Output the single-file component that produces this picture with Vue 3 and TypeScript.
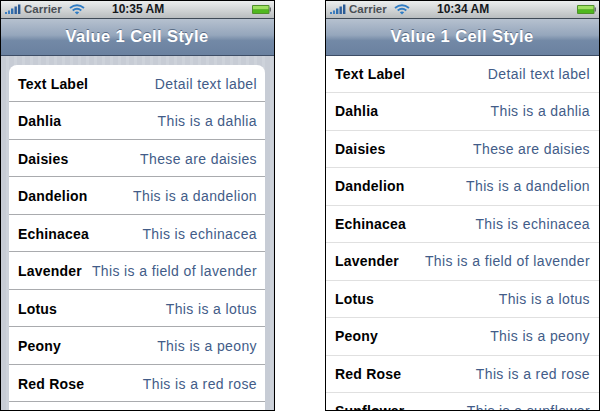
<script setup lang="ts">
interface Row { label: string; detail: string }
const rows: Row[] = [
  { label: 'Text Label', detail: 'Detail text label' },
  { label: 'Dahlia', detail: 'This is a dahlia' },
  { label: 'Daisies', detail: 'These are daisies' },
  { label: 'Dandelion', detail: 'This is a dandelion' },
  { label: 'Echinacea', detail: 'This is echinacea' },
  { label: 'Lavender', detail: 'This is a field of lavender' },
  { label: 'Lotus', detail: 'This is a lotus' },
  { label: 'Peony', detail: 'This is a peony' },
  { label: 'Red Rose', detail: 'This is a red rose' },
  { label: 'Sunflower', detail: 'This is a sunflower' },
]
const phones = [
  { time: '10:35 AM', grouped: true },
  { time: '10:34 AM', grouped: false },
]
</script>

<template>
  <div class="page">
    <section v-for="p in phones" :key="p.time" class="phone">
      <div class="status">
        <svg class="signal" width="16" height="10" viewBox="0 0 16 10">
          <rect x="0" y="8" width="2" height="2" fill="#3f7fc0" />
          <rect x="3" y="6.5" width="2" height="3.5" fill="#3f7fc0" />
          <rect x="6" y="4.5" width="2.4" height="5.5" fill="#2f6fb0" />
          <rect x="9.5" y="2.5" width="2.4" height="7.5" fill="#2f5f9c" />
          <rect x="13" y="0.5" width="2.4" height="9.5" fill="#2a5a94" />
        </svg>
        <span class="carrier">Carrier</span>
        <svg class="wifi" width="16" height="11" viewBox="0 0 16 11" fill="none" stroke="#2f7cc4" stroke-width="1.9">
          <path d="M1 4 Q8 -1.4 15 4" />
          <path d="M3.7 6.4 Q8 3 12.3 6.4" />
          <path d="M8 10.4 L5.8 8.3 Q8 6.8 10.2 8.3 Z" fill="#2f7cc4" stroke="none" />
        </svg>
        <span class="time">{{ p.time }}</span>
        <svg class="battery" width="19" height="9" viewBox="0 0 19 9">
          <rect x="0" y="0" width="17.5" height="9" rx="1" fill="#4f8f2a" />
          <rect x="1" y="1" width="15.5" height="3.5" fill="#9fe060" />
          <rect x="1" y="4.5" width="15.5" height="3.5" fill="#4fb81e" />
          <rect x="17.5" y="2.5" width="1.5" height="4" fill="#6a6f70" />
        </svg>
      </div>
      <header class="nav">Value 1 Cell Style</header>
      <div class="content" :class="{ grouped: p.grouped }">
        <ul class="table">
          <li v-for="r in rows" :key="r.label" class="row">
            <span class="label">{{ r.label }}</span>
            <span class="detail">{{ r.detail }}</span>
          </li>
        </ul>
      </div>
    </section>
  </div>
</template>

<style>
html, body { margin: 0; background: #fff; }
</style>

<style scoped>
.page {
  width: 600px;
  height: 411px;
  display: flex;
  justify-content: space-between;
  overflow: hidden;
  font-family: "Liberation Sans", Arial, sans-serif;
}
.phone {
  width: 275px;
  height: 411px;
  box-sizing: border-box;
  border: 1px solid #000;
  display: flex;
  flex-direction: column;
  overflow: hidden;
  background: #fff;
}
.status {
  height: 16.5px;
  flex: none;
  display: flex;
  align-items: center;
  position: relative;
  padding-left: 4px;
  background: linear-gradient(#eceeee, #b9bdbf);
  border-bottom: 1px solid #3f4a56;
}
.signal { flex: none; }
.carrier {
  margin-left: 3px;
  font-size: 11.5px;
  font-weight: 700;
  color: #4a4f55;
}
.wifi { margin-left: 7px; flex: none; }
.time {
  position: absolute;
  left: 111px;
  font-size: 12px;
  font-weight: 700;
  color: #15181c;
}
.battery { position: absolute; right: 3px; top: 4px; }
.nav {
  height: 37px;
  flex: none;
  display: flex;
  align-items: center;
  justify-content: center;
  padding-right: 1px;
  box-sizing: border-box;
  font-size: 16.5px;
  font-weight: 700;
  letter-spacing: 0.4px;
  color: #fff;
  text-shadow: 0 -1px 0 #5a6c85;
  background: linear-gradient(#b6c1cf 0%, #95a6bc 45%, #7389a6 60%, #6a81a0 100%);
  border-bottom: 1px solid #3d4d66;
}
.content { flex: 1; min-height: 0; overflow: hidden; }
.content.grouped {
  padding: 9px 9px 0 8px;
  background: repeating-linear-gradient(90deg, #c7ccd5 0 5px, #cdd2da 5px 8px);
}
.table { list-style: none; margin: 0; padding: 0; background: #fff; }
.grouped .table {
  border-radius: 8px 8px 0 0;
  overflow: hidden;
}
.row {
  height: 37.5px;
  box-sizing: border-box;
  display: flex;
  align-items: center;
  justify-content: space-between;
  padding: 0 9px;
  border-bottom: 1px solid #e0e0e0;
}
.grouped .row { border-bottom-color: #a9abae; padding-top: 2px; padding-right: 8px; }
.label {
  font-size: 14px;
  font-weight: 700;
  letter-spacing: 0.2px;
  color: #000;
  white-space: nowrap;
}
.detail {
  font-size: 14px;
  letter-spacing: 0.38px;
  color: #425c88;
  white-space: nowrap;
}
</style>
